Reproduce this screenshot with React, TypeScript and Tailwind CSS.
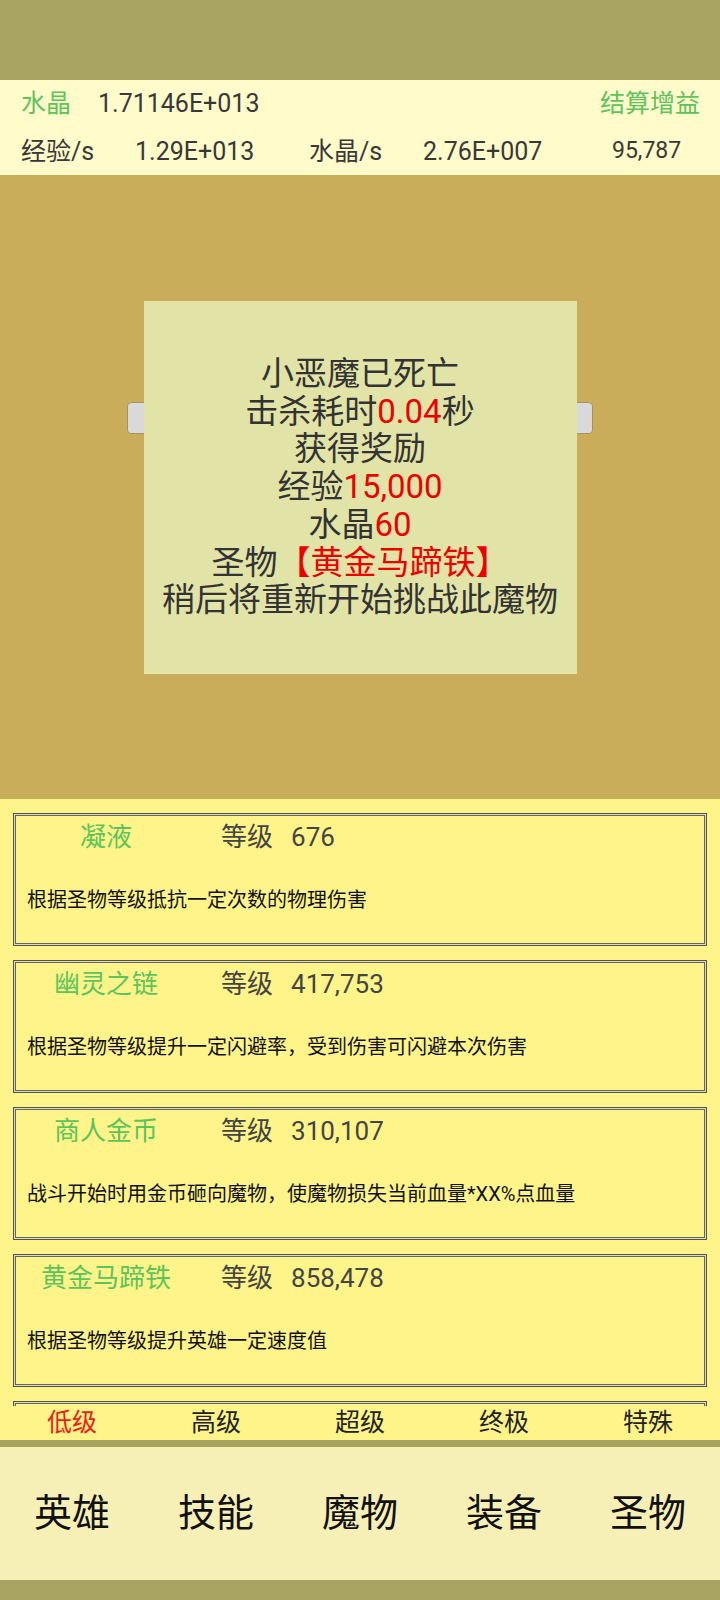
import React from 'react';

// ─── Data ─────────────────────────────────────────────────────────────────────

const RELICS = [
  { name: '凝液', level: '676', desc: '根据圣物等级抵抗一定次数的物理伤害' },
  { name: '幽灵之链', level: '417,753', desc: '根据圣物等级提升一定闪避率，受到伤害可闪避本次伤害' },
  { name: '商人金币', level: '310,107', desc: '战斗开始时用金币砸向魔物，使魔物损失当前血量*XX%点血量' },
  { name: '黄金马蹄铁', level: '858,478', desc: '根据圣物等级提升英雄一定速度值' },
  { name: '', level: '', desc: '' },
];

const TIERS = ['低级', '高级', '超级', '终极', '特殊'];
const NAV = ['英雄', '技能', '魔物', '装备', '圣物'];

const FONT = "font-['Roboto','Noto_Sans_CJK_SC',sans-serif]";

// ─── Relic Card ───────────────────────────────────────────────────────────────

function RelicCard({ name, level, desc }: { name: string; level: string; desc: string }) {
  return (
    <div className="h-[133px] shrink-0 border border-[#55554a] bg-[#fff48a] shadow-[inset_0_0_0_1px_#d9d9c4,inset_0_0_0_2px_#66665a] p-[2px]">
      <div className="mt-[2px] flex h-[38px] items-center text-[26px]">
        <span className="w-[180px] text-center text-[#5cc45a]">{name}</span>
        {name && (
          <>
            <span className="ml-[25px] text-[#444]">等级</span>
            <span className="ml-[18px] text-[#444]">{level}</span>
          </>
        )}
      </div>
      <p className="mt-[32px] pl-[11px] text-[20px] leading-[24px] text-[#111]">{desc}</p>
    </div>
  );
}

// ─── Page ─────────────────────────────────────────────────────────────────────

export default function App() {
  return (
    <div className={`flex h-[1600px] w-[720px] flex-col overflow-hidden ${FONT}`}>
      {/* Status bar */}
      <div className="h-[80px] shrink-0 bg-[#a9a462]" />

      {/* Resource header */}
      <div className="h-[95px] shrink-0 bg-[#fffbca] text-[25px] text-[#383838]">
        <div className="flex h-[48px] items-center pl-[21px] pr-[20px]">
          <span className="w-[77px] text-[#5cc45a]">水晶</span>
          <span>1.71146E+013</span>
          <span className="ml-auto text-[#5cc45a]">结算增益</span>
        </div>
        <div className="flex h-[47px] items-center pl-[21px]">
          <span className="w-[114px]">经验/s</span>
          <span className="w-[174px]">1.29E+013</span>
          <span className="w-[114px]">水晶/s</span>
          <span className="w-[189px]">2.76E+007</span>
          <span className="text-[23px]">95,787</span>
        </div>
      </div>

      {/* Battle area */}
      <div className="relative flex h-[624px] shrink-0 items-center justify-center bg-[#c9ad5b]">
        <div className="absolute left-[127px] top-[227px] h-[32px] w-[466px] rounded-[4px] border border-[#a89458] bg-[#d9d9d9]" />
        <div className="relative flex h-[373px] w-[433px] flex-col items-center justify-center bg-[#e2e3a6] text-center text-[33px] leading-[37.7px] text-[#333]">
          <div>小恶魔已死亡</div>
          <div>
            击杀耗时<span className="text-[#ee0000]">0.04</span>秒
          </div>
          <div>获得奖励</div>
          <div>
            经验<span className="text-[#ee0000]">15,000</span>
          </div>
          <div>
            水晶<span className="text-[#ee0000]">60</span>
          </div>
          <div>
            圣物<span className="text-[#ee0000]">【黄金马蹄铁】</span>
          </div>
          <div className="whitespace-nowrap">稍后将重新开始挑战此魔物</div>
        </div>
      </div>

      {/* Relic list */}
      <div className="flex h-[607px] shrink-0 flex-col gap-[14px] overflow-hidden bg-[#fff48a] px-[13px] pt-[14px]">
        {RELICS.map((r, i) => (
          <RelicCard key={i} {...r} />
        ))}
      </div>

      {/* Tier tabs */}
      <div className="flex h-[34px] shrink-0 items-center bg-[#fff48a] text-[25px]">
        {TIERS.map((t, i) => (
          <span key={t} className={`flex-1 text-center ${i === 0 ? 'text-[#f01a1a]' : 'text-[#222]'}`}>
            {t}
          </span>
        ))}
      </div>

      <div className="h-[7px] shrink-0 bg-[#a9a462]" />

      {/* Bottom nav */}
      <div className="flex h-[133px] shrink-0 items-center bg-[#f7f0b6] text-[38px] text-[#111]">
        {NAV.map((n) => (
          <span key={n} className="flex-1 text-center">
            {n}
          </span>
        ))}
      </div>

      <div className="h-[20px] shrink-0 bg-[#a9a462]" />
    </div>
  );
}
